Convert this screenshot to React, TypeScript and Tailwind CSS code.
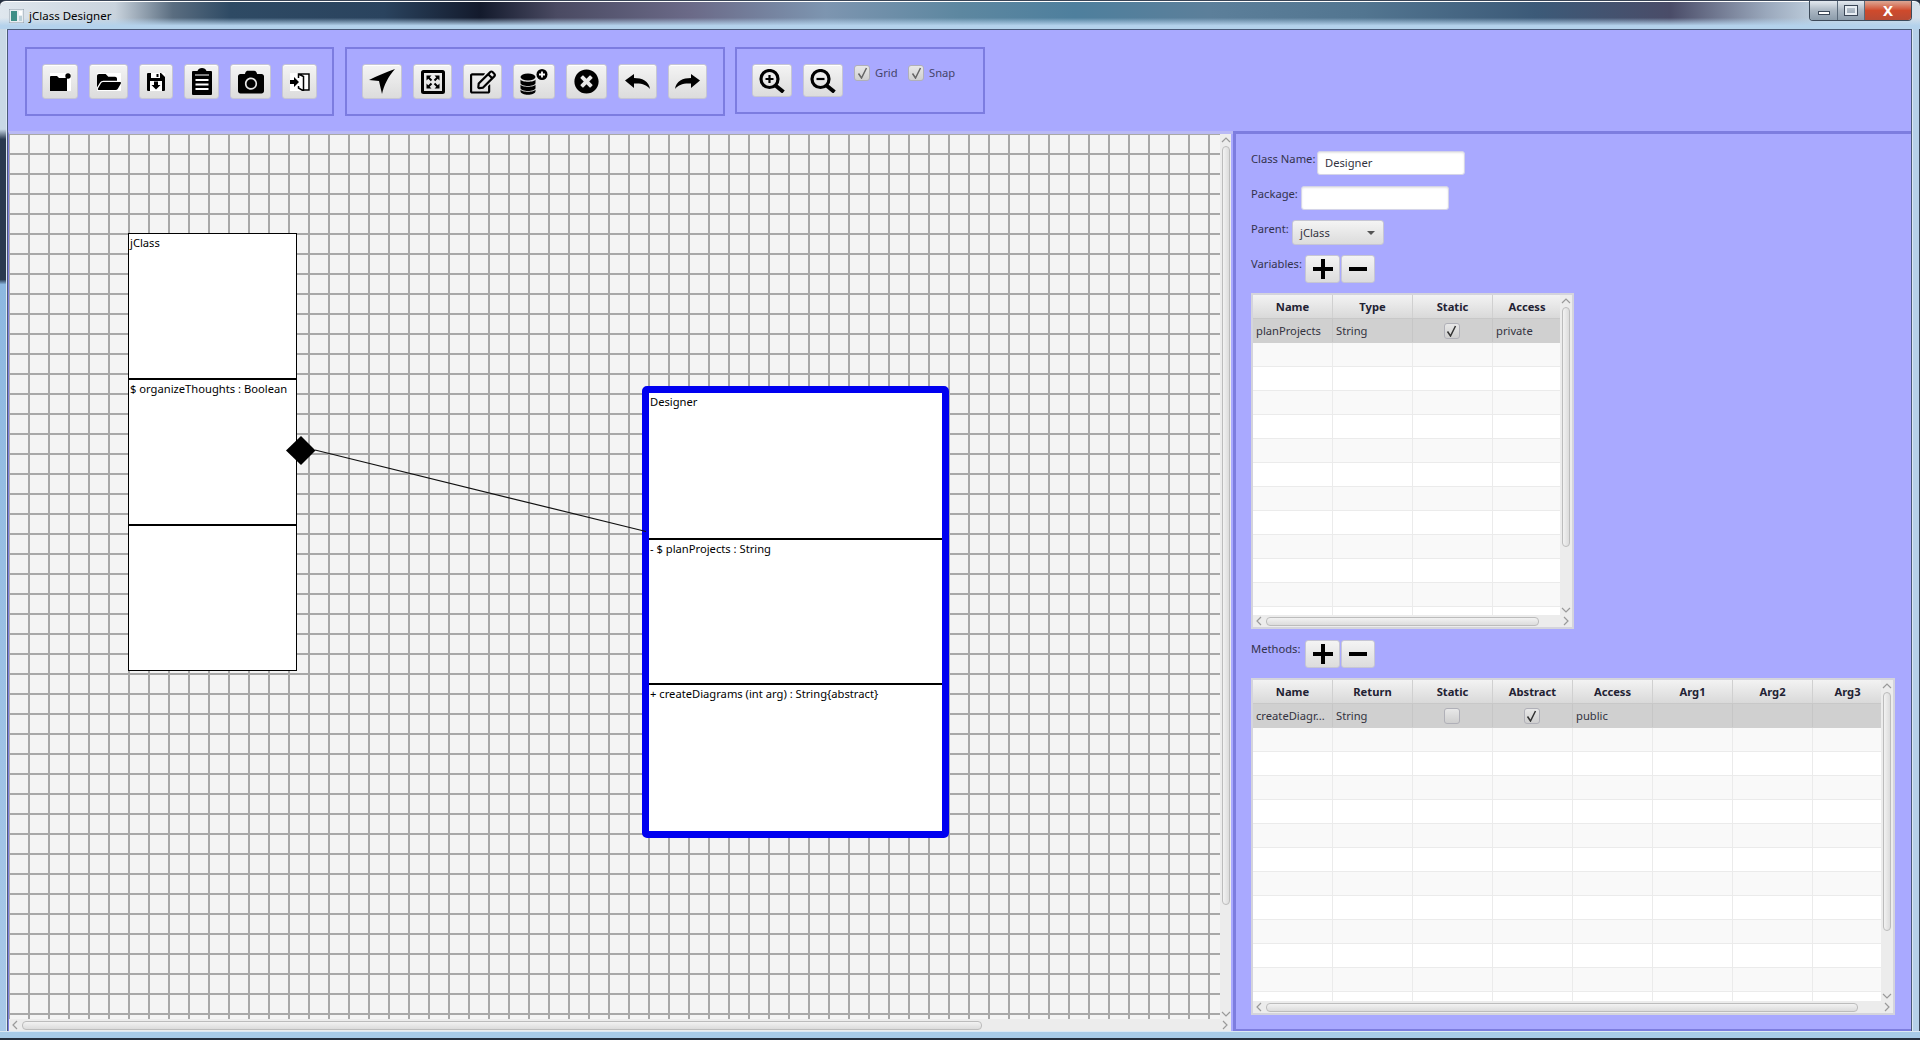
import React from 'react';
import { FaCamera, FaFolderOpen, FaRegEdit, FaTimesCircle } from 'react-icons/fa';

const btnClass =
  'flex items-center justify-center shrink-0 h-[35px] rounded-[3px] border border-[#c6c6d4] bg-gradient-to-b from-[#f4f4f4] to-[#dcdcdc] shadow-[inset_0_1px_0_#ffffff]';

const ToolButton: React.FC<{ w: string; children: React.ReactNode }> = ({ w, children }) => (
  <div className={`${btnClass} ${w}`}>{children}</div>
);

const NewFolderIcon = () => (
  <svg width="21" height="18" viewBox="0 0 21 18" className="bg-white">
    <path d="M0 4a1 1 0 0 1 1-1h6l2 2h8v13H0z" />
    <circle cx="18" cy="3" r="2.7" />
  </svg>
);

const SaveIcon = () => (
  <svg width="18" height="18" viewBox="0 0 18 18" className="bg-white">
    <path d="M0 1a1 1 0 0 1 1-1h13l4 4v13a1 1 0 0 1-1 1H1a1 1 0 0 1-1-1z" />
    <rect x="4" y="0" width="9" height="5" fill="#fff" />
    <rect x="9.5" y="1" width="2" height="3" />
    <rect x="3" y="8" width="12" height="10" fill="#fff" />
    <path d="M7 8.5h4V12h2.5L9 16.5 4.5 12H7z" />
  </svg>
);

const ClipboardIcon = () => (
  <svg width="20" height="27" viewBox="0 0 20 27">
    <path d="M1 3h4.500C6 1 8 0 10 0s4 1 4.500 3H19a1 1 0 0 1 1 1v22a1 1 0 0 1-1 1H1a1 1 0 0 1-1-1V4a1 1 0 0 1 1-1z" />
    <rect x="3" y="6.500" width="14" height="1" fill="#fff" />
    <rect x="3.500" y="11" width="13" height="2" fill="#fff" />
    <rect x="3.500" y="15.500" width="13" height="2" fill="#fff" />
    <rect x="3.500" y="20" width="13" height="2" fill="#fff" />
  </svg>
);

const DoorIcon = () => (
  <svg width="20" height="18" viewBox="0 0 20 18" className="bg-white">
    <path d="M0 7h4V4l5 5-5 5v-3H0z" />
    <path d="M8.500 5V1h10.500v16H12M8.500 1l5 2.500V18l-5-3v-2" fill="none" stroke="#000" strokeWidth="1.500" />
  </svg>
);

const NavigateIcon = () => (
  <svg width="26" height="25" viewBox="0 0 26 25">
    <path d="M26 0C17 3 8 7 0 11l10 1 3 13C15 16 19 8 26 0z" />
  </svg>
);

const ExpandIcon = () => (
  <svg width="24" height="24" viewBox="0 0 24 24">
    <rect x="1.500" y="1.500" width="21" height="21" rx="1" fill="none" stroke="#000" strokeWidth="3" />
    <path d="M5.500 5.500h5l-5 5zM18.500 5.500v5l-5-5zM5.500 18.500v-5l5 5zM18.500 18.500h-5l5-5z" />
    <path d="M7.500 7.500l3 3M16.500 7.500l-3 3M7.500 16.500l3-3M16.500 16.500l-3-3" stroke="#000" strokeWidth="2" />
  </svg>
);

const DatabasePlusIcon = () => (
  <svg width="28" height="26" viewBox="0 0 28 26">
    <ellipse cx="8" cy="8" rx="7.500" ry="3.500" />
    <path d="M.5 10.500c1 3 14 3 15 0V14c0 4-15 4-15 0z" />
    <path d="M.5 15.500c1 3 14 3 15 0V19c0 4-15 4-15 0z" />
    <path d="M.5 20.500c1 3 14 3 15 0V22c0 5-15 5-15 0z" />
    <circle cx="22" cy="5.500" r="5.500" />
    <path d="M22 2.500v6M19 5.500h6" stroke="#fff" strokeWidth="1.800" />
  </svg>
);

const UndoIcon = ({ flip }: { flip?: boolean }) => (
  <svg width="25" height="15" viewBox="0 0 25 15" className={flip ? '-scale-x-100' : ''}>
    <path d="M0 6.500L9 0v4c8 0 15 3 16 11-3-4-8-6-16-5.500V14z" />
  </svg>
);

const ZoomIcon = ({ plus }: { plus?: boolean }) => (
  <svg width="26" height="24" viewBox="0 0 26 24">
    <circle cx="10.500" cy="10" r="8.500" fill="none" stroke="#000" strokeWidth="3.200" />
    <path d="M16.500 16.500L24.500 23" stroke="#000" strokeWidth="4" />
    <path d={plus ? 'M6.500 10h8M10.500 6v8' : 'M6.500 10h8'} stroke="#000" strokeWidth="2.200" />
  </svg>
);

const CheckMark = ({ color }: { color: string }) => (
  <svg width="11" height="12" viewBox="0 0 11 12" fill="none" stroke={color} strokeWidth="1.500">
    <path d="M1.500 6.500L4.500 11 9.500 1" />
  </svg>
);

const CheckBox: React.FC<{ checked?: boolean; color?: string }> = ({ checked, color = '#333333' }) => (
  <div className="flex h-[16px] w-[16px] shrink-0 items-center justify-center rounded-[3px] border border-[#b0b0b8] bg-gradient-to-b from-[#e8e8e8] to-[#cfcfcf]">
    {checked && <CheckMark color={color} />}
  </div>
);

const Chevron = ({ dir }: { dir: 'up' | 'down' | 'left' | 'right' }) => {
  const paths = {
    up: 'M1 5l4-4 4 4',
    down: 'M1 1l4 4 4-4',
    left: 'M5 1L1 5l4 4',
    right: 'M1 1l4 4-4 4',
  };
  const wide = dir === 'up' || dir === 'down';
  return (
    <svg width={wide ? 10 : 6} height={wide ? 6 : 10} viewBox={wide ? '0 0 10 6' : '0 0 6 10'} fill="none" stroke="#9a9a9a" strokeWidth="1.200" className="shrink-0">
      <path d={paths[dir]} />
    </svg>
  );
};

const VScrollBar: React.FC<{ thumb: string; className?: string }> = ({ thumb, className = '' }) => (
  <div className={`flex flex-col items-center justify-between bg-[#ececec] pb-[2px] pt-[3px] ${className}`}>
    <div className="flex w-full flex-col items-center">
      <Chevron dir="up" />
      <div className={`mt-[3px] w-[8px] rounded-[4px] border border-[#bcbcbc] bg-gradient-to-r from-[#f2f2f2] to-[#dcdcdc] ${thumb}`} />
    </div>
    <Chevron dir="down" />
  </div>
);

const HScrollBar: React.FC<{ thumb: string; className?: string }> = ({ thumb, className = '' }) => (
  <div className={`flex items-center justify-between bg-[#ececec] px-[3px] ${className}`}>
    <div className="flex items-center gap-[4px]">
      <Chevron dir="left" />
      <div className={`h-[9px] rounded-[4px] border border-[#bcbcbc] bg-gradient-to-b from-[#f2f2f2] to-[#dcdcdc] ${thumb}`} />
    </div>
    <Chevron dir="right" />
  </div>
);

type Cell = string | { check: boolean };

const DataTable: React.FC<{
  columns: string[];
  row: Cell[];
  rowCount: number;
  lastCol: string;
  className: string;
  vThumb: string;
  hThumb: string;
}> = ({ columns, row, rowCount, lastCol, className, vThumb, hThumb }) => (
  <div className={`flex flex-col border-2 border-[#d4d4dc] bg-white ${className}`}>
    <div className="flex min-h-0 flex-1">
      <div className="min-w-0 flex-1 overflow-hidden">
        <div className="flex h-[24px] border-b border-[#c8c8c8]">
          {columns.map((c, i) => (
            <div
              key={c}
              className={`flex shrink-0 items-center justify-center border-r border-[#d0d0d0] bg-gradient-to-b from-[#f3f3f3] to-[#d9d9d9] font-bold text-[#222233] ${i === columns.length - 1 ? lastCol : 'w-[80px]'}`}
            >
              {c}
            </div>
          ))}
        </div>
        {Array.from({ length: rowCount }).map((_, r) => (
          <div
            key={r}
            className={`flex h-[24px] border-b ${r === 0 ? 'border-[#d0d0d0] bg-[#d0d0d0]' : r % 2 === 1 ? 'border-[#ebebeb] bg-[#f9f9f9]' : 'border-[#ebebeb] bg-white'}`}
          >
            {columns.map((c, i) => {
              const cell = r === 0 ? row[i] : '';
              return (
                <div
                  key={c}
                  className={`flex shrink-0 items-center overflow-hidden whitespace-nowrap border-r px-[3px] text-[#333340] ${r === 0 ? 'border-[#c6c6c6]' : 'border-[#ebebeb]'} ${i === columns.length - 1 ? lastCol : 'w-[80px]'} ${typeof cell === 'object' ? 'justify-center pr-[5px]' : ''}`}
                >
                  {typeof cell === 'object' ? <CheckBox checked={cell.check} /> : cell}
                </div>
              );
            })}
          </div>
        ))}
      </div>
      <VScrollBar thumb={vThumb} className="w-[12px] shrink-0" />
    </div>
    <HScrollBar thumb={hThumb} className="h-[12px] shrink-0" />
  </div>
);

const AddRemove: React.FC = () => (
  <div className="flex gap-[1px]">
    <div className="flex h-[28px] w-[35px] items-center justify-center rounded-[3px] border border-[#c6c6d4] bg-gradient-to-b from-[#f4f4f4] to-[#dcdcdc]">
      <svg width="20" height="20" viewBox="0 0 20 20"><path d="M8 0h4v8h8v4h-8v8H8v-8H0V8h8z" /></svg>
    </div>
    <div className="flex h-[28px] w-[34px] items-center justify-center rounded-[3px] border border-[#c6c6d4] bg-gradient-to-b from-[#f4f4f4] to-[#dcdcdc]">
      <svg width="18" height="4" viewBox="0 0 18 4"><rect width="18" height="4" /></svg>
    </div>
  </div>
);

const TextInput: React.FC<{ value?: string }> = ({ value }) => (
  <div className="flex h-[24px] w-[148px] items-center rounded-[3px] border border-[#d4d4e8] bg-white px-[7px] text-[#333340] shadow-[inset_0_1px_2px_#e4e4e4]">
    {value}
  </div>
);

const ClassBox: React.FC<{ sections: [string, string][]; className: string }> = ({ sections, className }) => (
  <div className={`absolute flex flex-col bg-white text-black ${className}`}>
    {sections.map(([text, size], i) => (
      <div key={i} className={`px-[1px] pt-[1px] ${size} ${i > 0 ? 'border-t-2 border-black' : ''}`}>
        {text}
      </div>
    ))}
  </div>
);

export default function App() {
  return (
    <div className="flex h-[1040px] w-[1920px] flex-col overflow-hidden bg-[#26303f] font-['Noto_Sans','Open_Sans',sans-serif] text-[11.2px] leading-[16px]">
      {/* Title bar */}
      <div className="flex h-[29px] shrink-0 items-start justify-between rounded-t-[6px] border-t border-[#3a4658] bg-[linear-gradient(to_bottom,transparent_60%,#b4d2ec_88%),linear-gradient(to_right,#dfe7ee_0%,#c9d3dd_6%,#5a6d80_9%,#2e4a64_12%,#2a435e_20%,#131a2c_25%,#4a4a62_29%,#6b6a88_36%,#7d95b0_43%,#5d87a0_50%,#4e7f9d_56%,#5c7f9a_63%,#527590_71%,#3c5a78_80%,#4a4c68_87%,#9aa8bc_92%,#c5d5e3_95%,#d5e0ea_100%)] shadow-[inset_0_1px_0_#ffffff]">
        <div className="flex items-center pl-[9px] pt-[7px]">
          <svg width="15" height="14" viewBox="0 0 15 14" className="mr-[5px]">
            <rect width="15" height="14" fill="#e8eef2" stroke="#8a98a6" />
            <rect x="2" y="2" width="6" height="10" fill="#3f8f86" />
            <rect x="10" y="2" width="3" height="4" fill="#ffffff" />
            <rect x="10" y="7" width="3" height="5" fill="#bcd0d8" />
          </svg>
          <span className="text-[11.5px] text-black">jClass Designer</span>
        </div>
        <div className="mr-[8px] flex h-[20px] overflow-hidden rounded-b-[4px] border border-t-0 border-[#3d4a5a]">
          <div className="flex w-[28px] items-center justify-center border-r border-[#5a6a7a] bg-gradient-to-b from-[#e4eaf0] via-[#aab6c2] to-[#8c9cab]">
            <div className="mt-[4px] h-[4px] w-[12px] border border-[#3a4656] bg-white" />
          </div>
          <div className="flex w-[27px] items-center justify-center border-r border-[#5a6a7a] bg-gradient-to-b from-[#e4eaf0] via-[#aab6c2] to-[#8c9cab]">
            <div className="h-[9px] w-[12px] border-2 border-[#e8eef4] outline outline-1 outline-[#3a4656]" />
          </div>
          <div className="flex w-[46px] items-center justify-center bg-gradient-to-b from-[#dca694] via-[#cf4a2c] to-[#b84a34] text-[15px] font-bold leading-none text-white">
            X
          </div>
        </div>
      </div>

      <div className="flex min-h-0 flex-1">
        <div className="w-[7px] shrink-0 border-r border-[#dce8f4] bg-[linear-gradient(to_bottom,#c8d8e6_0%,#c8d8e6_10%,#2a3a50_11%,#2a3a50_25%,#8db8e0_25.5%,#a8c8e8_100%)]" />
        {/* Window client area */}
        <div className="flex min-w-0 flex-1 flex-col border-x border-t border-[#4a5a78] border-b-[#7d7ddf] bg-[#a9a9ff]">
          {/* Toolbar */}
          <div className="flex h-[101px] shrink-0 items-start gap-[10px] pl-[17px] pt-[17px]">
            <div className="mr-[1px] flex h-[69px] w-[309px] shrink-0 gap-[11px] border-2 border-[#7c7ce0] pl-[15px] pt-[15px]">
              <ToolButton w="w-[36px]"><NewFolderIcon /></ToolButton>
              <ToolButton w="w-[39px]">
                <span className="flex h-[18px] w-[24px] items-center justify-center bg-white"><FaFolderOpen size={24} /></span>
              </ToolButton>
              <ToolButton w="w-[34px]"><SaveIcon /></ToolButton>
              <ToolButton w="w-[35px]"><ClipboardIcon /></ToolButton>
              <ToolButton w="w-[41px]"><FaCamera size={26} /></ToolButton>
              <ToolButton w="w-[35px]"><DoorIcon /></ToolButton>
            </div>
            <div className="flex h-[69px] w-[380px] shrink-0 gap-[11px] border-2 border-[#7c7ce0] pl-[15px] pt-[15px]">
              <ToolButton w="w-[40px]"><NavigateIcon /></ToolButton>
              <ToolButton w="w-[39px]"><ExpandIcon /></ToolButton>
              <ToolButton w="w-[39px]"><FaRegEdit size={26} /></ToolButton>
              <ToolButton w="w-[42px]"><DatabasePlusIcon /></ToolButton>
              <ToolButton w="w-[41px]"><FaTimesCircle size={25} /></ToolButton>
              <ToolButton w="w-[39px]"><UndoIcon /></ToolButton>
              <ToolButton w="w-[39px]"><UndoIcon flip /></ToolButton>
            </div>
            <div className="flex h-[67px] w-[250px] shrink-0 items-start gap-[11px] border-2 border-[#7c7ce0] pl-[15px] pt-[15px]">
              <div className={`${btnClass} !h-[33px] w-[40px]`}><ZoomIcon plus /></div>
              <div className={`${btnClass} !h-[33px] w-[40px]`}><ZoomIcon /></div>
              <div className="flex items-center gap-[5px] pt-[1px] text-[#44446a]">
                <CheckBox checked color="#666666" />
                <span className="w-[28px]">Grid</span>
                <CheckBox checked color="#666666" />
                <span>Snap</span>
              </div>
            </div>
          </div>

          <div className="flex min-h-0 flex-1">
            {/* Canvas with scrollbars */}
            <div className="flex w-[1225px] shrink-0 flex-col border-l border-t-[3px] border-l-[#7d7ddf] border-t-[#b9b9f5] pr-[2px]">
              <div className="flex min-h-0 flex-1">
                <div className="relative min-h-0 flex-1 overflow-hidden bg-[#f4f4f4] bg-[linear-gradient(to_right,#a8a8a8_2px,transparent_2px),linear-gradient(to_bottom,#a8a8a8_2px,transparent_2px)] bg-size-[20px_20px] bg-position-[19px_19px]">
                  <ClassBox
                    className="left-[119px] top-[99px] h-[438px] w-[169px] border border-black"
                    sections={[
                      ['jClass', 'h-[144px]'],
                      ['$ organizeThoughts : Boolean', 'h-[146px]'],
                      ['', 'flex-1'],
                    ]}
                  />
                  <ClassBox
                    className="left-[633px] top-[252px] h-[452px] w-[307px] rounded-[5px] border-[7px] border-[#0000f0]"
                    sections={[
                      ['Designer', 'h-[145px]'],
                      ['- $ planProjects : String', 'h-[145px]'],
                      ['+ createDiagrams (int arg) : String{abstract}', 'flex-1'],
                    ]}
                  />
                  <svg className="pointer-events-none absolute inset-0 h-full w-full">
                    <path d="M306 316L637 397.500" stroke="#111" strokeWidth="1.200" />
                    <path d="M292 302L306.500 316.500 292 331 277 316.500Z" fill="#000" />
                  </svg>
                </div>
                <VScrollBar thumb="h-[759px]" className="w-[11px] shrink-0" />
              </div>
              <HScrollBar thumb="w-[960px]" className="h-[12px] shrink-0" />
            </div>

            {/* Properties panel */}
            <div className="flex min-w-0 flex-1 flex-col border-[3px] border-b-2 border-r-0 border-[#7d7ddf] pl-[15px] pt-[17px] text-[#33334d]">
              <div className="flex">
                <span className="w-[66px] shrink-0 whitespace-nowrap">Class Name:</span>
                <TextInput value="Designer" />
              </div>
              <div className="mt-[11px] flex">
                <span className="w-[50px] shrink-0">Package:</span>
                <TextInput />
              </div>
              <div className="mt-[10px] flex">
                <span className="w-[41px] shrink-0 pt-[1px]">Parent:</span>
                <div className="flex h-[25px] w-[92px] items-center justify-between rounded-[3px] border border-[#c6c6d4] bg-gradient-to-b from-[#f4f4f4] to-[#dcdcdc] pl-[7px] pr-[8px] text-[#333340]">
                  jClass
                  <svg width="8" height="4" viewBox="0 0 8 4"><path d="M0 0h8L4 4z" fill="#555" /></svg>
                </div>
              </div>
              <div className="mt-[10px] flex">
                <span className="w-[54px] shrink-0 pt-[1px]">Variables:</span>
                <AddRemove />
              </div>
              <DataTable
                columns={['Name', 'Type', 'Static', 'Access']}
                row={['planProjects', 'String', { check: true }, 'private']}
                rowCount={13}
                lastCol="w-[69px]"
                className="mt-[10px] h-[336px] w-[323px]"
                vThumb="h-[240px]"
                hThumb="w-[273px]"
              />
              <div className="mt-[11px] flex">
                <span className="w-[54px] shrink-0 pt-[1px]">Methods:</span>
                <AddRemove />
              </div>
              <DataTable
                columns={['Name', 'Return', 'Static', 'Abstract', 'Access', 'Arg1', 'Arg2', 'Arg3']}
                row={['createDiagr...', 'String', { check: false }, { check: true }, 'public', '', '', '']}
                rowCount={13}
                lastCol="w-[70px]"
                className="mt-[10px] h-[337px] w-[644px]"
                vThumb="h-[239px]"
                hThumb="w-[592px]"
              />
            </div>
          </div>
        </div>
        <div className="w-[8px] shrink-0 border-l border-r border-l-[#dce8f4] border-r-[#3a4658] bg-[#b6d0e8]" />
      </div>

      {/* Bottom window frame */}
      <div className="h-[9px] shrink-0 border-b-2 border-t border-b-[#26303f] border-t-[#dce8f4] bg-[#a8cbe8]" />
    </div>
  );
}
